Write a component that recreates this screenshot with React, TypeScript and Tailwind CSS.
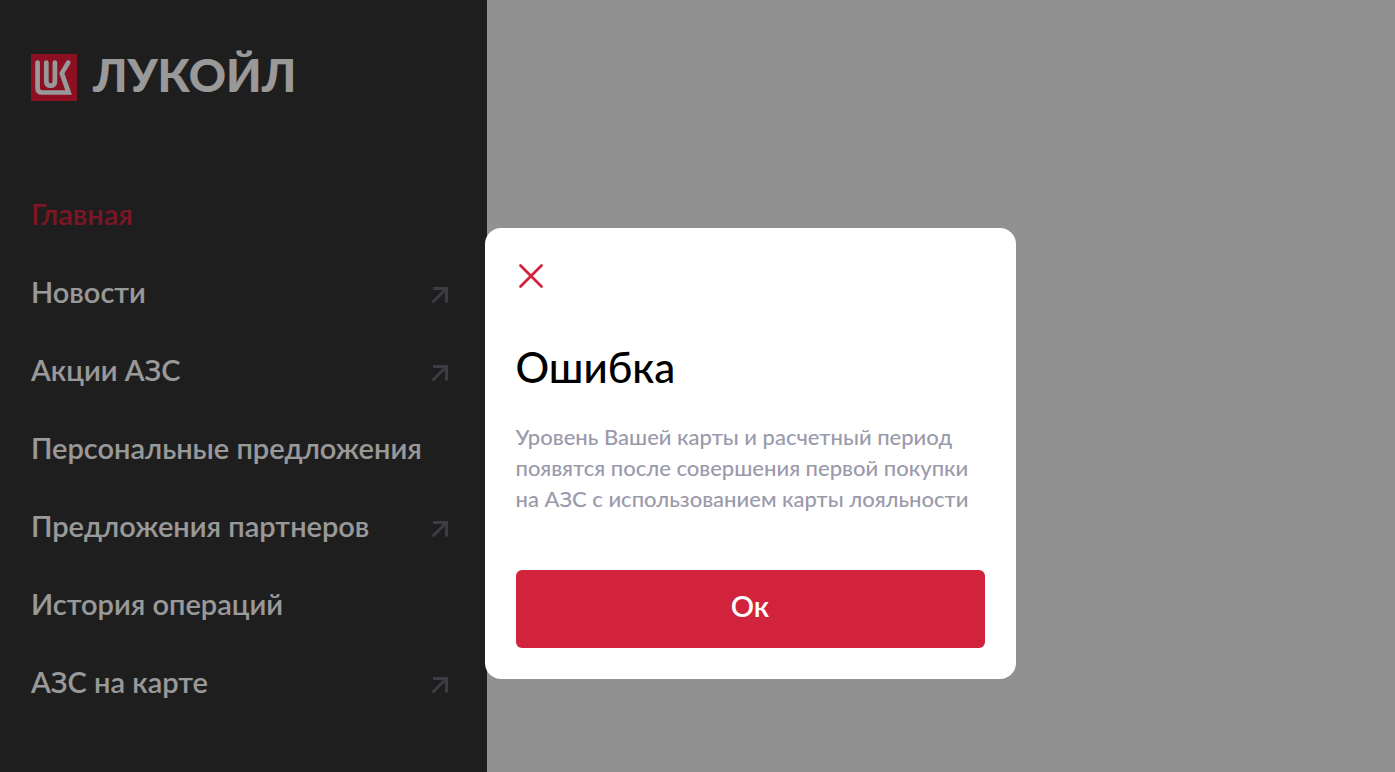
import { useState } from 'react'
import clsx from 'clsx'

// ─── Data ─────────────────────────────────────────────────────────────────────

interface MenuItem {
  label: string
  active?: boolean
  external?: boolean
}

const MENU: MenuItem[] = [
  { label: 'Главная', active: true },
  { label: 'Новости', external: true },
  { label: 'Акции АЗС', external: true },
  { label: 'Персональные предложения' },
  { label: 'Предложения партнеров', external: true },
  { label: 'История операций' },
  { label: 'АЗС на карте', external: true },
]

// ─── Icons ────────────────────────────────────────────────────────────────────

function LogoMark() {
  return (
    <svg viewBox="0 0 46 47" className="h-[47px] w-[46px] shrink-0" fill="none" aria-hidden="true">
      <path d="M0 0h46v47H0z" fill="#e91c39" />
      <g stroke="#fff" strokeWidth="4.7" strokeLinecap="round">
        <path d="M6.6 8.6V34Q6.6 38.5 11 38.5H37.6L30.8 19.4L37.2 8.6" strokeMiterlimit="10" />
        <path d="M15.3 8.6V27.4Q15.3 31.6 19.6 31.6Q23.9 31.6 23.9 27.4V8.6" />
      </g>
    </svg>
  )
}

function ArrowIcon() {
  return (
    <svg viewBox="0 0 18 20" className="h-5 w-[18px] shrink-0" fill="none" stroke="#64646f" strokeWidth="3" aria-hidden="true">
      <path d="M2 4.5H15.5V18.5M15.5 4.5L1.5 18.5" />
    </svg>
  )
}

function CloseIcon() {
  return (
    <svg viewBox="0 0 30 30" className="h-[30px] w-[30px]" fill="none" stroke="#d2233c" strokeWidth="2.8" strokeLinecap="round" aria-hidden="true">
      <path d="M4.5 4.5L25.5 25.5M25.5 4.5L4.5 25.5" />
    </svg>
  )
}

// ─── Sidebar ──────────────────────────────────────────────────────────────────

function Sidebar() {
  return (
    <aside className="w-[487px] shrink-0 bg-[#333] pt-[54px] pr-[38px] pb-12 pl-[31px]">
      <a href="#" className="flex h-[47px] items-center gap-4 text-white">
        <LogoMark />
        <span className="pb-1.5 text-[46px] leading-[46px] font-black">ЛУКОЙЛ</span>
      </a>

      <nav className="mt-[76px]">
        <ul>
          {MENU.map((item) => (
            <li key={item.label}>
              <a
                href="#"
                className={clsx(
                  'flex h-[78px] items-center justify-between text-[29px] leading-9 font-semibold whitespace-nowrap',
                  item.active ? 'text-[#d2233c]' : 'text-white'
                )}
              >
                <span className="pb-1">{item.label}</span>
                {item.external && <ArrowIcon />}
              </a>
            </li>
          ))}
        </ul>
      </nav>
    </aside>
  )
}

// ─── Dialog ───────────────────────────────────────────────────────────────────

function ErrorDialog({ onClose }: { onClose: () => void }) {
  return (
    <div className="fixed inset-0 flex items-center justify-center bg-black/40 pt-[135px] pl-[105px]">
      <div
        role="dialog"
        aria-modal="true"
        aria-labelledby="dialog-title"
        className="w-[531px] rounded-2xl bg-white px-[31px] pt-[33px] pb-[31px]"
      >
        <button type="button" onClick={onClose} aria-label="Закрыть" className="block cursor-pointer">
          <CloseIcon />
        </button>

        <h1 id="dialog-title" className="mt-[50px] text-[42px] leading-[52px] font-medium text-black">
          Ошибка
        </h1>
        <p className="mt-7 text-[22px] leading-[31px] font-medium whitespace-nowrap text-[#9a9aab]">
          Уровень Вашей карты и расчетный период
          <br />
          появятся после совершения первой покупки
          <br />
          на АЗС с использованием карты лояльности
        </p>

        <button
          type="button"
          onClick={onClose}
          className="mt-14 block h-[78px] w-full cursor-pointer rounded-md bg-[#d2233c] pb-1.5 text-[29px] leading-9 font-semibold text-white"
        >
          Ок
        </button>
      </div>
    </div>
  )
}

// ─── Page ─────────────────────────────────────────────────────────────────────

export default function App() {
  const [open, setOpen] = useState(true)

  return (
    <div className="flex min-h-screen bg-[#f2f2f2] font-['Lato','Open_Sans',sans-serif]">
      <Sidebar />
      <main className="flex-1" />
      {open && <ErrorDialog onClose={() => setOpen(false)} />}
    </div>
  )
}
